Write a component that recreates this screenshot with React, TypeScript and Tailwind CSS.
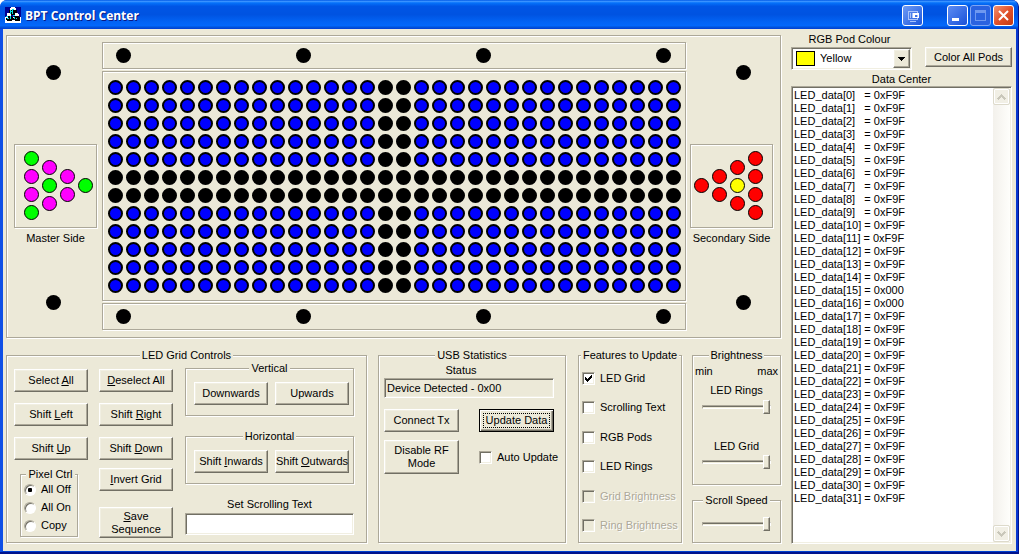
import { useState } from "react";
import type { ReactNode } from "react";
import clsx from "clsx";

const COLUMNS = 32;
const ROWS = 12;

const ledData = Array.from({ length: COLUMNS }, (_, i) => {
  const gap = i < 10 ? "   " : " ";
  const value = i === 15 || i === 16 ? "0x000" : "0xF9F";
  return `LED_data[${i}]${gap}= ${value}`;
}).join("\n");

const isLit = (row: number, col: number) =>
  row !== 5 && row !== 6 && col !== 15 && col !== 16;

const masterPods = [
  ["lime", "magenta", "magenta", "lime"],
  ["magenta", "lime", "magenta"],
  ["magenta", "magenta"],
  ["lime"],
];

const secondaryPods = [
  ["red"],
  ["red", "red"],
  ["red", "yellow", "red"],
  ["red", "red", "red", "red"],
];

const podColors: Record<string, string> = {
  lime: "bg-[#00ff00]",
  magenta: "bg-[#ff00ff]",
  red: "bg-[#ff0000]",
  yellow: "bg-[#ffff00]",
};

const etched =
  "border border-[#aca899] shadow-[1px_1px_0_#fff,inset_1px_1px_0_#fff]";
const sunken =
  "border border-t-[#aca899] border-l-[#aca899] border-b-white border-r-white shadow-[inset_1px_1px_0_#716f64,inset_-1px_-1px_0_#f1efe2]";
const raised =
  "border border-t-white border-l-white border-b-[#716f64] border-r-[#716f64] bg-[#ece9d8] shadow-[inset_-1px_-1px_0_#aca899,inset_1px_1px_0_#f1efe2]";

function PushButton({
  className,
  children,
}: {
  className?: string;
  children: ReactNode;
}) {
  return (
    <button
      type="button"
      className={clsx(
        raised,
        "flex shrink-0 items-center justify-center whitespace-nowrap text-center",
        className
      )}
    >
      <span>{children}</span>
    </button>
  );
}

function Group({
  title,
  className,
  children,
}: {
  title: string;
  className?: string;
  children: ReactNode;
}) {
  return (
    <fieldset className={clsx(etched, "min-w-0", className)}>
      <legend className="mx-auto whitespace-nowrap bg-[#ece9d8] px-[2px]">
        {title}
      </legend>
      {children}
    </fieldset>
  );
}

function Check({
  label,
  checked = false,
  disabled = false,
}: {
  label: string;
  checked?: boolean;
  disabled?: boolean;
}) {
  const [on, setOn] = useState(checked);
  return (
    <label
      className={clsx(
        "flex items-center gap-[5px] whitespace-nowrap",
        disabled && "text-[#aca899] [text-shadow:1px_1px_0_#fff]"
      )}
    >
      <span className="relative size-[13px] shrink-0">
        <input
          type="checkbox"
          checked={on}
          disabled={disabled}
          onChange={(e) => setOn(e.target.checked)}
          className={clsx(
            sunken,
            "block size-[13px] appearance-none",
            disabled ? "bg-[#ece9d8]" : "bg-white"
          )}
        />
        {on && (
          <svg
            viewBox="0 0 13 13"
            shapeRendering="crispEdges"
            className="pointer-events-none absolute inset-0 size-[13px]"
          >
            <path
              d="M3 5h1v3h-1zM4 6h1v3h-1zM5 7h1v3h-1zM6 6h1v3h-1zM7 5h1v3h-1zM8 4h1v3h-1zM9 3h1v3h-1z"
              fill="#000"
            />
          </svg>
        )}
      </span>
      {label}
    </label>
  );
}

function Slider({ label }: { label: string }) {
  return (
    <input
      type="range"
      aria-label={label}
      min={0}
      max={100}
      defaultValue={100}
      className="mx-auto block h-[14px] w-[69px] appearance-none bg-transparent [&::-webkit-slider-runnable-track]:h-1 [&::-webkit-slider-runnable-track]:border [&::-webkit-slider-runnable-track]:border-t-[#aca899] [&::-webkit-slider-runnable-track]:border-l-[#aca899] [&::-webkit-slider-runnable-track]:border-b-white [&::-webkit-slider-runnable-track]:border-r-white [&::-webkit-slider-runnable-track]:shadow-[inset_0_1px_0_#716f64] [&::-webkit-slider-thumb]:-mt-[6px] [&::-webkit-slider-thumb]:h-[14px] [&::-webkit-slider-thumb]:w-[7px] [&::-webkit-slider-thumb]:appearance-none [&::-webkit-slider-thumb]:border [&::-webkit-slider-thumb]:border-t-white [&::-webkit-slider-thumb]:border-l-white [&::-webkit-slider-thumb]:border-b-[#716f64] [&::-webkit-slider-thumb]:border-r-[#716f64] [&::-webkit-slider-thumb]:bg-[#ece9d8] [&::-webkit-slider-thumb]:shadow-[inset_-1px_-1px_0_#aca899]"
    />
  );
}

function Dot() {
  return <span className="block size-[15px] shrink-0 rounded-full bg-black" />;
}

function DotStrip() {
  return (
    <div className={clsx(etched, "flex justify-between py-[5px] pr-[14px] pl-[13px]")}>
      <Dot />
      <Dot />
      <Dot />
      <Dot />
    </div>
  );
}

function PodSide({
  name,
  pods,
  dotMargin,
  podMargin,
}: {
  name: string;
  pods: string[][];
  dotMargin: string;
  podMargin: string;
}) {
  return (
    <div className="w-[83px] shrink-0 pt-[23px]">
      <div className={dotMargin}>
        <Dot />
      </div>
      <div className={clsx(etched, "mt-16 flex h-[84px] items-start pt-[6px]", podMargin)}>
        <div className="flex items-center gap-[3px]">
          {pods.map((column, i) => (
            <div key={i} className="flex flex-col gap-[3px]">
              {column.map((color, j) => (
                <span
                  key={j}
                  className={clsx(
                    "size-[15px] rounded-full border border-black",
                    podColors[color]
                  )}
                />
              ))}
            </div>
          ))}
        </div>
      </div>
      <p className="mt-1 text-center">{name}</p>
      <div className={clsx("mt-[50px]", dotMargin)}>
        <Dot />
      </div>
    </div>
  );
}

function LedPanel() {
  return (
    <section className={clsx(etched, "flex pt-[6px] pr-[7px] pb-[7px] pl-[7px]")}>
      <PodSide name="Master Side" pods={masterPods} dotMargin="ml-8" podMargin="pl-[9px]" />
      <div className="mr-1 ml-[5px] flex flex-1 flex-col gap-[2px]">
        <DotStrip />
        <div
          className={clsx(
            etched,
            "grid grid-cols-[repeat(32,15px)] justify-between gap-y-[3px] pt-2 pr-1 pb-[7px] pl-[5px]"
          )}
        >
          {Array.from({ length: ROWS * COLUMNS }, (_, i) => (
            <span
              key={i}
              className={clsx(
                "size-[15px] rounded-full border-2 border-black",
                isLit(Math.floor(i / COLUMNS), i % COLUMNS) ? "bg-[#0000ff]" : "bg-black"
              )}
            />
          ))}
        </div>
        <DotStrip />
      </div>
      <PodSide
        name="Secondary Side"
        pods={secondaryPods}
        dotMargin="ml-[46px]"
        podMargin="pl-[3px]"
      />
    </section>
  );
}

function PixelControl() {
  return (
    <Group title="Pixel Ctrl" className="mx-[6px] mt-2 h-[69px] w-[58px] pl-[3px]">
      <div className="flex flex-col gap-[5px] pt-[2px]">
        {["All Off", "All On", "Copy"].map((name, i) => (
          <label key={name} className="flex items-center gap-[5px] whitespace-nowrap">
            <input
              type="radio"
              name="pixel"
              defaultChecked={i === 0}
              className="size-3 shrink-0 appearance-none rounded-full border border-t-[#aca899] border-r-white border-b-white border-l-[#aca899] bg-white shadow-[inset_1px_1px_0_#716f64] checked:bg-[radial-gradient(circle,#000_2px,#fff_2.5px)]"
            />
            {name}
          </label>
        ))}
      </div>
    </Group>
  );
}

function GridControls() {
  return (
    <Group title="LED Grid Controls" className="w-[361px] shrink-0">
      <div className="flex pl-[7px]">
        <div className="flex flex-col pt-[7px]">
          <div className="flex flex-col gap-[11px]">
            <PushButton className="h-[23px] w-[74px]">Select <u>A</u>ll</PushButton>
            <PushButton className="h-[23px] w-[74px]">Shift <u>L</u>eft</PushButton>
            <PushButton className="h-[23px] w-[74px]">Shift <u>U</u>p</PushButton>
          </div>
          <PixelControl />
        </div>
        <div className="ml-[11px] flex flex-col pt-[7px]">
          <div className="flex flex-col gap-[11px]">
            <PushButton className="h-[23px] w-[74px]"><u>D</u>eselect All</PushButton>
            <PushButton className="h-[23px] w-[74px]">Shift <u>R</u>ight</PushButton>
            <PushButton className="h-[23px] w-[74px]">Shift <u>D</u>own</PushButton>
          </div>
          <PushButton className="mt-2 h-[23px] w-[74px]"><u>I</u>nvert Grid</PushButton>
          <PushButton className="mt-4 h-[31px] w-[74px]">
            <u>S</u>ave
            <br />
            Sequence
          </PushButton>
        </div>
        <div className="ml-3 flex w-[169px] flex-col">
          <Group title="Vertical" className="h-[54px]">
            <div className="flex gap-[7px] pt-[7px] pl-2">
              <PushButton className="h-[23px] w-[74px]">Downwards</PushButton>
              <PushButton className="h-[23px] w-[74px]">Upwards</PushButton>
            </div>
          </Group>
          <Group title="Horizontal" className="mt-[14px] h-[54px]">
            <div className="flex gap-[7px] pt-[7px] pl-2">
              <PushButton className="h-[23px] w-[74px]">Shift <u>I</u>nwards</PushButton>
              <PushButton className="h-[23px] w-[74px]">Shift <u>O</u>utwards</PushButton>
            </div>
          </Group>
          <label htmlFor="scrolling-text" className="mt-[14px] text-center">
            Set Scrolling Text
          </label>
          <input
            id="scrolling-text"
            type="text"
            className={clsx(sunken, "mt-[2px] h-[22px] w-full bg-white px-1")}
          />
        </div>
      </div>
    </Group>
  );
}

function UsbStatistics() {
  return (
    <Group title="USB Statistics" className="ml-[11px] w-[188px] shrink-0">
      <div className="flex flex-col pt-[2px] pr-[11px] pl-[5px]">
        <label htmlFor="status" className="pr-4 text-center">
          Status
        </label>
        <input
          id="status"
          readOnly
          defaultValue="Device Detected - 0x00"
          className={clsx(sunken, "mt-px h-5 w-full px-[2px]")}
        />
        <div className="mt-[11px] flex justify-between">
          <PushButton className="h-[23px] w-[75px]">Connect Tx</PushButton>
          <button
            type="button"
            className="h-[23px] w-[75px] border border-black p-px shadow-[inset_1px_1px_0_#fff,inset_-1px_-1px_0_#716f64,inset_-2px_-2px_0_#aca899]"
          >
            <span className="mx-[2px] block border border-dotted border-black whitespace-nowrap">
              Update Data
            </span>
          </button>
        </div>
        <div className="mt-2 flex items-center justify-between">
          <PushButton className="h-[34px] w-[75px]">
            Disable RF
            <br />
            Mode
          </PushButton>
          <div className="w-[75px]">
            <Check label="Auto Update" />
          </div>
        </div>
      </div>
    </Group>
  );
}

function Features() {
  return (
    <Group title="Features to Update" className="ml-3 w-[104px] shrink-0">
      <div className="flex h-[180px] flex-col justify-between pt-[10px] pb-[10px] pl-[3px]">
        <Check label="LED Grid" checked />
        <Check label="Scrolling Text" />
        <Check label="RGB Pods" />
        <Check label="LED Rings" />
        <Check label="Grid Brightness" disabled />
        <Check label="Ring Brightness" disabled />
      </div>
    </Group>
  );
}

function Sliders() {
  return (
    <div className="ml-[10px] flex flex-1 flex-col">
      <Group title="Brightness" className="h-[136px]">
        <div className="flex justify-between px-[2px] pt-[3px]">
          <span>min</span>
          <span>max</span>
        </div>
        <p className="mt-[6px] text-center">LED Rings</p>
        <div className="mt-[3px]">
          <Slider label="LED Rings" />
        </div>
        <p className="mt-[26px] text-center">LED Grid</p>
        <div className="mt-[2px]">
          <Slider label="LED Grid" />
        </div>
      </Group>
      <Group title="Scroll Speed" className="mt-[9px] h-[49px]">
        <div className="mt-[10px]">
          <Slider label="Scroll Speed" />
        </div>
      </Group>
    </div>
  );
}

function DataColumn() {
  return (
    <aside className="flex w-[221px] shrink-0 flex-col">
      <div className="flex items-end justify-between">
        <div className="w-[121px]">
          <label htmlFor="pod-colour" className="block pr-1 text-center">
            RGB Pod Colour
          </label>
          <div className="relative mt-px">
            <select
              id="pod-colour"
              defaultValue="Yellow"
              className={clsx(sunken, "block h-[23px] w-full appearance-none bg-white pl-7")}
            >
              <option>Yellow</option>
            </select>
            <span className="pointer-events-none absolute top-1 left-[5px] h-[15px] w-[19px] border border-black bg-[#ffff00]" />
            <span
              className={clsx(
                raised,
                "pointer-events-none absolute top-[2px] right-[2px] flex h-[19px] w-[17px] items-center justify-center"
              )}
            >
              <svg viewBox="0 0 7 4" shapeRendering="crispEdges" className="h-1 w-[7px]">
                <path d="M0 0h7v1h-1v1h-1v1h-1v1h-1v-1h-1v-1h-1v-1h-1z" />
              </svg>
            </span>
          </div>
        </div>
        <PushButton className="mb-[3px] h-5 w-[87px]">Color All Pods</PushButton>
      </div>
      <label htmlFor="data-center" className="mt-[3px] text-center">
        Data Center
      </label>
      <div className={clsx(sunken, "flex flex-1 bg-white p-px")}>
        <textarea
          id="data-center"
          readOnly
          defaultValue={ledData}
          className="block flex-1 resize-none overflow-hidden pt-px pl-px whitespace-pre"
        />
        <div className="flex w-[17px] shrink-0 flex-col justify-between bg-[linear-gradient(90deg,#f3f1ec,#fefefb)]">
          <ScrollArrow />
          <ScrollArrow down />
        </div>
      </div>
    </aside>
  );
}

function ScrollArrow({ down = false }: { down?: boolean }) {
  return (
    <button
      type="button"
      aria-label={down ? "Scroll down" : "Scroll up"}
      className="flex h-[17px] items-center justify-center rounded-[2px] border border-[#dddacb] bg-[#f1efe5] shadow-[inset_0_0_0_1px_#fff]"
    >
      <svg
        viewBox="0 0 9 6"
        shapeRendering="crispEdges"
        className={clsx("h-[6px] w-[9px]", down && "rotate-180")}
      >
        <path
          d="M4 0h1v1h1v1h1v1h1v1h1v1h-1v1h-1v-1h-1v-1h-1v-1h-1v1h-1v1h-1v1h-1v-1h-1v-1h1v-1h1v-1h1v-1h1z"
          fill="#c9c7ba"
        />
      </svg>
    </button>
  );
}

const captionButton =
  "flex size-[21px] items-center justify-center rounded-[3px] border";

function AppIcon() {
  return (
    <svg viewBox="0 0 16 16" shapeRendering="crispEdges" className="size-4 shrink-0">
      <path fill="#000090" d="M0 0h16v10H0z" />
      <path fill="#fff" d="M0 10h16v6H0z" />
      {/* top block */}
      <path fill="#fff" d="M6 0h4v1h1v2H5V1h1z" />
      <path fill="#000" d="M4 3h8v5H4z" />
      <path fill="#00e0e0" d="M5 3h1v4H5zM7 2h2v1H8v4H7zM6 4h1v1H6z" />
      {/* bottom blocks */}
      <path fill="#fff" d="M2 6h3v1h1v2H2zM10 6h3v1h1v2h-4z" />
      <path fill="#000" d="M3 9h4v1h1v3H7v1H2v-1H1v-2h2zM9 9h5v1h1v4h-5v-1H8v-2h1z" />
      <path fill="#00e0e0" d="M1 9h2v1H1zM2 11h2v1H2zM5 9h1v3H5zM8 8h2v1H8zM9 10h1v2H9zM11 11h1v1h-1z" />
    </svg>
  );
}

function TitleBar() {
  return (
    <header className="flex h-[29px] items-center bg-[linear-gradient(180deg,#0058e6_0%,#3a93ff_5%,#0572fa_10%,#0055e5_22%,#0053e1_50%,#0263f4_75%,#0368fb_88%,#0150d8_95%,#003dd7_100%)] pr-1 pl-[5px]">
      <AppIcon />
      <h1 className="ml-1 flex-1 pt-px font-['Open_Sans'] text-[12px] font-bold text-white [text-shadow:1px_1px_0_#0a1883]">
        BPT Control Center
      </h1>
      <div className="flex pt-[2px]">
        <button
          type="button"
          aria-label="Dock window"
          className={clsx(captionButton, "mr-6 border-white bg-linear-to-br from-[#6f9bf5] to-[#1c55dc]")}
        >
          <svg viewBox="0 0 12 12" shapeRendering="crispEdges" className="size-3">
            <path
              fill="#a9c3fa"
              fillRule="evenodd"
              d="M1 1h10v9H1zM2 2v7h8V2zM3 3h1v5H3zM5 3h1v5H5zM3 11h6v1H3z"
            />
            <path fill="#fff" fillRule="evenodd" d="M6 3h6v5H6zM8 5v2h3V5z" />
          </svg>
        </button>
        <button
          type="button"
          aria-label="Minimize"
          className={clsx(captionButton, "mr-[2px] border-white bg-linear-to-br from-[#5d8cf3] to-[#1a50d8]")}
        >
          <svg viewBox="0 0 13 13" className="size-[13px]">
            <path fill="#fff" d="M1 9h7v3H1z" />
          </svg>
        </button>
        <button
          type="button"
          aria-label="Maximize"
          disabled
          className={clsx(captionButton, "mr-[2px] border-[#7fa5f4] bg-[#2a62e0]")}
        >
          <svg viewBox="0 0 13 13" shapeRendering="crispEdges" className="size-[13px]">
            <path fill="#6f98f0" d="M1 1h11v11H1zM2 4v7h9V4z" fillRule="evenodd" />
          </svg>
        </button>
        <button
          type="button"
          aria-label="Close"
          className={clsx(captionButton, "border-white bg-linear-to-br from-[#f0906f] via-[#e2512a] to-[#c33a12]")}
        >
          <svg viewBox="0 0 13 13" className="size-[13px]">
            <path d="M2 2l9 9M11 2l-9 9" stroke="#fff" strokeWidth="2" />
          </svg>
        </button>
      </div>
    </header>
  );
}

export default function App() {
  return (
    <div className="flex min-h-screen flex-col overflow-hidden rounded-t-[7px] border-r border-b-2 border-[#00138c] bg-[#0831d9] font-['Liberation_Sans',sans-serif] text-[11px] leading-[13px] text-black">
      <TitleBar />
      <div className="flex flex-1 gap-[10px] border-r-2 border-b border-l-[3px] border-l-[#0f4fe6] border-r-[#0838d0] border-b-[#0040d0] bg-[#ece9d8] pr-1 pl-[3px]">
        <main className="min-w-0 flex-1 pt-[6px] pb-2">
          <LedPanel />
          <div className="mt-[11px] flex">
            <GridControls />
            <UsbStatistics />
            <Features />
            <Sliders />
          </div>
        </main>
        <div className="flex pt-1 pb-[7px]">
          <DataColumn />
        </div>
      </div>
    </div>
  );
}
